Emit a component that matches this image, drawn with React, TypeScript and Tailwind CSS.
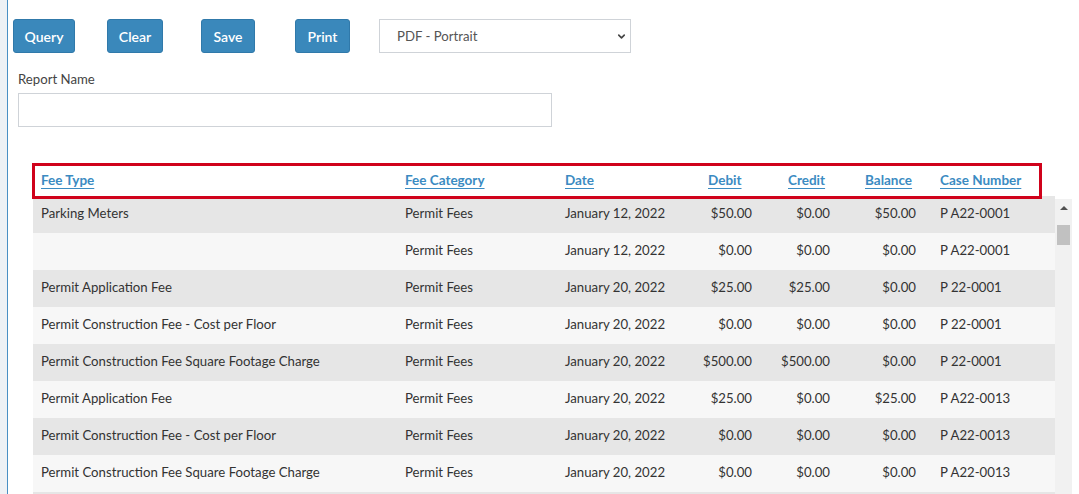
import { ChevronDown } from 'lucide-react'

interface FeeRow {
  feeType: string
  category: string
  date: string
  debit: string
  credit: string
  balance: string
  caseNumber: string
}

const rows: FeeRow[] = [
  { feeType: 'Parking Meters', category: 'Permit Fees', date: 'January 12, 2022', debit: '$50.00', credit: '$0.00', balance: '$50.00', caseNumber: 'P A22-0001' },
  { feeType: '', category: 'Permit Fees', date: 'January 12, 2022', debit: '$0.00', credit: '$0.00', balance: '$0.00', caseNumber: 'P A22-0001' },
  { feeType: 'Permit Application Fee', category: 'Permit Fees', date: 'January 20, 2022', debit: '$25.00', credit: '$25.00', balance: '$0.00', caseNumber: 'P 22-0001' },
  { feeType: 'Permit Construction Fee - Cost per Floor', category: 'Permit Fees', date: 'January 20, 2022', debit: '$0.00', credit: '$0.00', balance: '$0.00', caseNumber: 'P 22-0001' },
  { feeType: 'Permit Construction Fee Square Footage Charge', category: 'Permit Fees', date: 'January 20, 2022', debit: '$500.00', credit: '$500.00', balance: '$0.00', caseNumber: 'P 22-0001' },
  { feeType: 'Permit Application Fee', category: 'Permit Fees', date: 'January 20, 2022', debit: '$25.00', credit: '$0.00', balance: '$25.00', caseNumber: 'P A22-0013' },
  { feeType: 'Permit Construction Fee - Cost per Floor', category: 'Permit Fees', date: 'January 20, 2022', debit: '$0.00', credit: '$0.00', balance: '$0.00', caseNumber: 'P A22-0013' },
  { feeType: 'Permit Construction Fee Square Footage Charge', category: 'Permit Fees', date: 'January 20, 2022', debit: '$0.00', credit: '$0.00', balance: '$0.00', caseNumber: 'P A22-0013' },
]

function HeaderLink({ children }: { children: React.ReactNode }) {
  return (
    <a href="#" className="text-[13.5px] font-bold text-[#3b8bc2] underline underline-offset-[3px]">
      {children}
    </a>
  )
}

export default function App() {
  return (
    <div
      className="flex h-[494px] overflow-hidden bg-white text-[13.2px] text-[#333]"
      style={{ fontFamily: 'Lato, "Liberation Sans", sans-serif' }}
    >
      <div className="w-[7px] shrink-0 bg-[#eef1f5]" />
      <div className="w-px shrink-0 bg-[#4a8fc4]" />

      <div className="flex-1 flex flex-col">
        {/* toolbar */}
        <div className="flex items-center pt-[19px] pl-[5px]">
          <button className="h-[34px] w-[62px] rounded-[3px] border border-[#3079aa] bg-[#3a88bb] text-[14px] font-semibold text-white">
            Query
          </button>
          <button className="ml-[32px] h-[34px] w-[56px] rounded-[3px] border border-[#3079aa] bg-[#3a88bb] text-[14px] font-semibold text-white">
            Clear
          </button>
          <button className="ml-[38px] h-[34px] w-[54px] rounded-[3px] border border-[#3079aa] bg-[#3a88bb] text-[14px] font-semibold text-white">
            Save
          </button>
          <button className="ml-[40px] h-[34px] w-[55px] rounded-[3px] border border-[#3079aa] bg-[#3a88bb] text-[14px] font-semibold text-white">
            Print
          </button>
          <div className="ml-[29px] flex h-[34px] w-[252px] items-center justify-between border border-[#cfd3d8] bg-white pl-[17px] pr-[3px] text-[#555]">
            <span className="pt-px">PDF - Portrait</span>
            <ChevronDown size={11} strokeWidth={3.5} className="text-[#444]" />
          </div>
        </div>

        <div className="pl-[10px] pt-[17px]">
          <label className="block text-[13.2px] text-[#444]">Report Name</label>
          <input className="mt-[3px] h-[34px] w-[534px] border border-[#cfd3d8] bg-white outline-none" />
        </div>

        {/* table */}
        <div className="mt-[36px] ml-[24px] flex flex-col">
          <div className="relative z-10 mb-[-3px] flex h-[36px] w-[1010px] items-center border-[3px] border-[#d0021b] bg-white">
            <div className="w-[362px] pl-[6px]"><HeaderLink>Fee Type</HeaderLink></div>
            <div className="w-[160px] pl-[8px]"><HeaderLink>Fee Category</HeaderLink></div>
            <div className="w-[143px] pl-[8px]"><HeaderLink>Date</HeaderLink></div>
            <div className="w-[80px] pl-[8px]"><HeaderLink>Debit</HeaderLink></div>
            <div className="w-[77px] pl-[8px]"><HeaderLink>Credit</HeaderLink></div>
            <div className="w-[75px] pl-[8px]"><HeaderLink>Balance</HeaderLink></div>
            <div className="flex-1 pl-[8px]"><HeaderLink>Case Number</HeaderLink></div>
          </div>

          <div className="ml-px flex">
            <div className="w-[1022px]">
              {rows.map((row, idx) => (
                <div
                  key={idx}
                  className={`flex h-[37px] items-center ${idx % 2 === 0 ? 'bg-[#e6e6e6]' : 'bg-[#f7f7f7]'}`}
                >
                  <div className="w-[364px] pl-[8px]">{row.feeType}</div>
                  <div className="w-[160px] pl-[8px]">{row.category}</div>
                  <div className="w-[143px] pl-[8px]">{row.date}</div>
                  <div className="w-[80px] pr-[28px] text-right">{row.debit}</div>
                  <div className="w-[77px] pr-[27px] text-right">{row.credit}</div>
                  <div className="w-[75px] pr-[16px] text-right">{row.balance}</div>
                  <div className="flex-1 pl-[8px]">{row.caseNumber}</div>
                </div>
              ))}
              <div className="h-[37px] bg-[#e6e6e6]" />
            </div>
            {/* scrollbar */}
            <div className="mt-[3px] flex w-[17px] flex-col items-center bg-[#f1f1f1]">
              <div className="mt-[7px] h-0 w-0 border-x-[4px] border-b-[4px] border-x-transparent border-b-[#505050]" />
              <div className="mt-[15px] h-[20px] w-[13px] bg-[#c1c1c1]" />
            </div>
          </div>
        </div>
      </div>
    </div>
  )
}
